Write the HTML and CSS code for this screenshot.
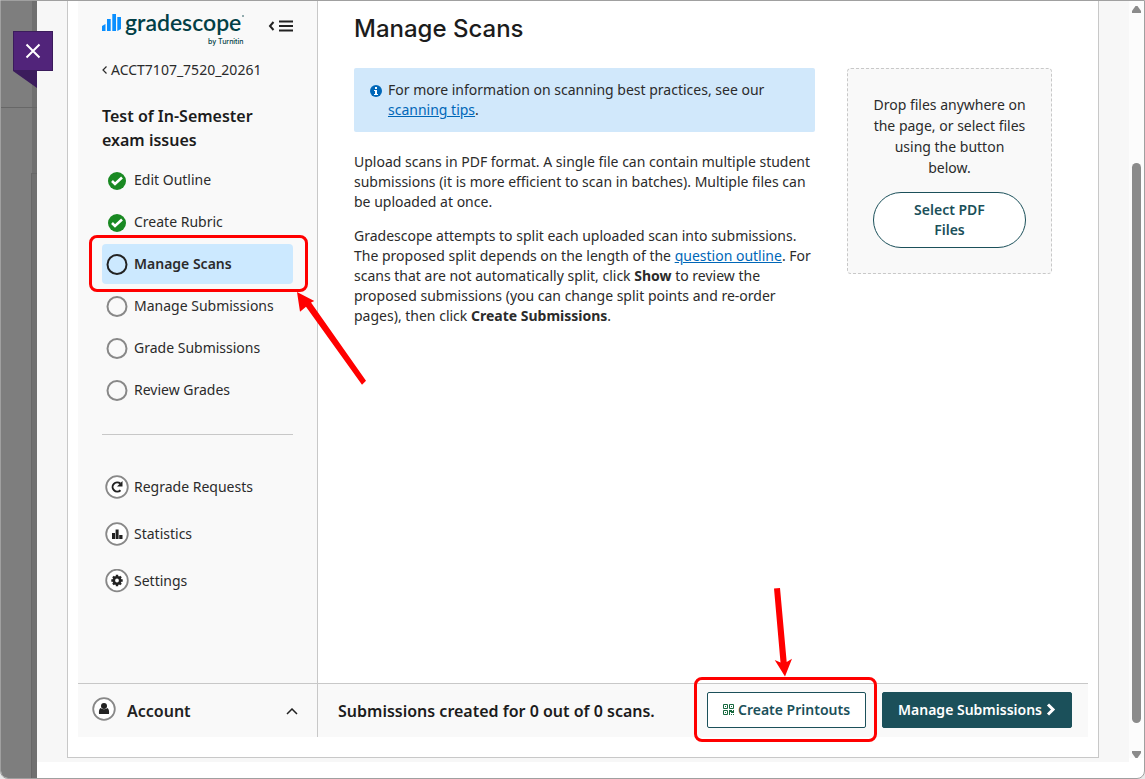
FILE: index.html
```html
<!DOCTYPE html>
<html lang="en">
<head>
<meta charset="utf-8">
<title>Manage Scans | Gradescope</title>
<link rel="stylesheet" href="styles.css">
</head>
<body>
<div class="window">
  <div class="backdrop">
    <div class="backdrop-top"></div>
    <div class="backdrop-body"></div>
    <button class="close" aria-label="Close"><svg width="16" height="16" viewBox="0 0 16 16"><path d="M1.500 1.500l13 13M14.500 1.500l-13 13" fill="none" stroke="#fff" stroke-width="2"/></svg></button>
    <svg class="close-fold" width="24" height="17" viewBox="0 0 24 17"><path d="M0 0h24v17z" fill="#3b1c5c"/></svg>
  </div>
  <div class="panel">
    <div class="card">
      <aside class="sidebar">
        <div class="brand">
          <svg class="logo" width="144" height="36" viewBox="0 0 144 36" role="img" aria-label="Gradescope by Turnitin">
            <g fill="#0a8fff"><path d="M0 13l3.500-2v7H0z"/><rect x="5" y="6" width="3.700" height="12"/><rect x="10.300" y="1" width="3.700" height="17"/><path d="M15.300 4H19v12l-3.700 2z"/></g>
            <text class="logo-name" x="23" y="18">gradescope</text>
            <text class="logo-by" x="106" y="31">by Turnitin</text>
            <circle cx="141" cy="3" r="1" fill="#6f9195"/>
          </svg>
          <button class="collapse" aria-label="Collapse sidebar"><svg width="25" height="14" viewBox="0 0 25 14"><path d="M5.500 3L2 7l3.500 4" fill="none" stroke="#222" stroke-width="2"/><path d="M11 2.500h14M11 7h14M11 11.500h14" stroke="#222" stroke-width="2"/></svg></button>
        </div>
        <a class="course" href="#"><svg width="5" height="8" viewBox="0 0 5 8"><path d="M4.500.5L1 4l3.500 3.500" fill="none" stroke="#2b2b2b" stroke-width="1.200"/></svg>ACCT7107_7520_20261</a>
        <h2 class="assignment">Test of In-Semester exam issues</h2>
        <nav class="steps" aria-label="Assignment steps">
          <a class="step" href="#"><svg class="step-icon" viewBox="0 0 22 22"><circle cx="11" cy="12" r="9" fill="#198922"/><path d="M6 12l3 3 7-6.500" fill="none" stroke="#fff" stroke-width="2.600"/></svg>Edit Outline</a>
          <a class="step" href="#"><svg class="step-icon" viewBox="0 0 22 22"><circle cx="11" cy="12" r="9" fill="#198922"/><path d="M6 12l3 3 7-6.500" fill="none" stroke="#fff" stroke-width="2.600"/></svg>Create Rubric</a>
          <a class="step step-active" href="#" aria-current="page"><svg class="step-icon" viewBox="0 0 22 22"><circle cx="11" cy="11.500" r="9.500" fill="none" stroke="#222" stroke-width="2"/></svg>Manage Scans
            <span class="mark mark-step"></span>
            <svg class="arrow arrow-step" width="72" height="94" viewBox="0 0 72 94"><path d="M0 0l17.300 9-3.300 1.500 55 78.200-4 4L9 14.700l-6 5z" fill="#f00"/></svg>
          </a>
          <a class="step" href="#"><svg class="step-icon" viewBox="0 0 22 22"><circle cx="11" cy="11.500" r="9.500" fill="none" stroke="#888" stroke-width="2"/></svg>Manage Submissions</a>
          <a class="step" href="#"><svg class="step-icon" viewBox="0 0 22 22"><circle cx="11" cy="11.500" r="9.500" fill="none" stroke="#888" stroke-width="2"/></svg>Grade Submissions</a>
          <a class="step" href="#"><svg class="step-icon" viewBox="0 0 22 22"><circle cx="11" cy="11.500" r="9.500" fill="none" stroke="#888" stroke-width="2"/></svg>Review Grades</a>
        </nav>
        <hr class="divider">
        <nav class="tools" aria-label="Assignment tools">
          <a class="tool" href="#"><svg class="tool-icon" viewBox="0 0 24 24"><circle cx="12" cy="12" r="10.800" fill="#fff" stroke="#888" stroke-width="1.800"/><path d="M15.500 15.200A4.600 4.600 0 1 1 15.300 8.600" fill="none" stroke="#222" stroke-width="2"/><path d="M17.500 6v5.500H12z" fill="#222"/></svg>Regrade Requests</a>
          <a class="tool" href="#"><svg class="tool-icon" viewBox="0 0 24 24"><circle cx="12" cy="12" r="10.800" fill="#fff" stroke="#888" stroke-width="1.800"/><path d="M7 11h3v6H7zM10.600 7.500h3V17h-3zM14.200 13h3.300v4h-3.300z" fill="#222"/></svg>Statistics</a>
          <a class="tool" href="#"><svg class="tool-icon" viewBox="0 0 24 24"><circle cx="12" cy="11.500" r="10.800" fill="#fff" stroke="#888" stroke-width="1.800"/><circle cx="12" cy="11.500" r="3.200" fill="none" stroke="#222" stroke-width="2.600"/><path d="M12 5.800v2.500M12 14.700v2.500M6.300 11.500h2.500M15.200 11.500h2.500M8 7.500l1.700 1.700M14.300 13.800l1.700 1.700M16 7.500l-1.700 1.700M9.700 13.800L8 15.500" stroke="#222" stroke-width="2.400"/></svg>Settings</a>
        </nav>
      </aside>
      <main class="main">
        <section class="info">
          <h1 class="title">Manage Scans</h1>
          <div class="notice">
            <svg width="12" height="12" viewBox="0 0 12 12"><circle cx="6" cy="6" r="6" fill="#0067b8"/><path d="M5 2h2v2H5zM4 5h3v4h1v1H4V9h1V6H4z" fill="#fff"/></svg>
            <p>For more information on scanning best practices, see our <a href="#">scanning tips</a>.</p>
          </div>
          <p class="text">Upload scans in PDF format. A single file can contain multiple student submissions (it is more efficient to scan in batches). Multiple files can be uploaded at once.</p>
          <p class="text">Gradescope attempts to split each uploaded scan into submissions. The proposed split depends on the length of the <a href="#">question outline</a>. For scans that are not automatically split, click <strong>Show</strong> to review the proposed submissions (you can change split points and re-order pages), then click <strong>Create Submissions</strong>.</p>
        </section>
        <section class="drop">
          <p>Drop files anywhere on the page, or select files using the button below.</p>
          <button class="select">Select PDF Files</button>
        </section>
      </main>
      <button class="account"><svg width="24" height="24" viewBox="0 0 24 24"><circle cx="12" cy="12" r="10.800" fill="#fff" stroke="#888" stroke-width="1.800"/><circle cx="12" cy="9" r="3" fill="#222"/><path d="M8.500 11q3.500 2.500 7 0 2 1.500 1.500 6H7q-.5-4.500 1.500-6z" fill="#222"/></svg><span>Account</span><svg class="chevron" width="12" height="7" viewBox="0 0 12 7"><path d="M1 6l5-5 5 5" fill="none" stroke="#222" stroke-width="1.500"/></svg></button>
      <footer class="actions">
        <p class="count">Submissions created for 0 out of 0 scans.</p>
        <button class="btn"><svg width="11" height="11" viewBox="0 0 11 11"><path d="M.5.5h4v4h-4zM6.500.5h4v4h-4zM.5 6.500h4v4h-4z" fill="none" stroke="#17693f"/><path d="M2 2h1v1H2zM8 2h1v1H8zM2 8h1v1H2zM6 6h3v1h1V6h1v3H8V8H7v3H6zM8 10h1v1H8zM10 10h1v1h-1z" fill="#17693f"/></svg>Create Printouts
          <span class="mark mark-print"></span>
          <svg class="arrow arrow-print" width="20" height="90" viewBox="0 0 20 90"><path d="M0 .5L6 0l6.700 74 5.300-3.300L11 88.500.7 72l5.800 2.500z" fill="#f00"/></svg>
        </button>
        <button class="btn btn-dark">Manage Submissions<svg width="10" height="13" viewBox="0 0 10 13"><path d="M2 1.500l5 5-5 5" fill="none" stroke="#fff" stroke-width="3"/></svg></button>
      </footer>
    </div>
  </div>
  <div class="scrollbar" aria-hidden="true">
    <svg width="9" height="7" viewBox="0 0 9 7"><path d="M0 7h9V5L5.500 0h-2L0 5z" fill="#8b8b8b"/></svg>
    <div class="thumb"></div>
    <svg width="9" height="7" viewBox="0 0 9 7"><path d="M0 0h9v2L5.500 7h-2L0 2z" fill="#8b8b8b"/></svg>
  </div>
</div>
</body>
</html>
```
FILE: styles.css
```css
* { box-sizing: border-box; }
body { margin: 0; background: #e8e8e8; color: #2b2b2b; font: 14px/20px "Noto Sans", sans-serif; }
p, h1, h2 { margin: 0; }
button { padding: 0; border: 0; background: none; color: inherit; font: inherit; cursor: pointer; }
svg { flex: none; }
.main a { color: #0067b8; text-decoration: underline; }

.window { display: flex; min-height: 100vh; border: 1px solid #a0a0a0; border-radius: 0 0 8px 8px; background: #fff; }

.backdrop { position: relative; flex: none; display: flex; flex-direction: column; width: 36px; border-radius: 0 0 0 7px; background: linear-gradient(90deg, #7e7e7e 31px, #707070 31px); }
.backdrop-top { height: 107px; border-bottom: 1px solid #676767; }
.backdrop-body { flex: 1; margin: 65px 0 0 30px; border: solid #676767; border-width: 1px 0 0 1px; }
.close { position: absolute; z-index: 2; top: 30px; left: 12px; display: grid; place-items: center; width: 40px; height: 40px; border: 1px solid #3b1c5c; background: #51247a; }
.close-fold { position: absolute; top: 70px; left: 12px; }

.panel { flex: 1; display: flex; padding: 0 30px 4px; margin-bottom: 16px; background: #f7f7f7; }
.card { flex: 1; display: grid; grid-template: 1fr auto / 240px 1fr; padding: 0 10px 20px; border: solid #c8c8c8; border-width: 0 1px 1px; background: #fff; }

.sidebar { padding: 12px 24px; border-right: 1px solid #c8c8c8; background: #f9f9f9; }
.brand { display: flex; justify-content: space-between; height: 36px; }
.logo { overflow: visible; }
.logo-name { fill: #023f46; font: 600 23px Lato, sans-serif; }
.logo-by { fill: #023f46; font: 500 7px Inter, sans-serif; }
.collapse { display: flex; align-items: center; height: 26px; }
.course { display: flex; align-items: center; gap: 4px; margin-top: 11px; color: inherit; text-decoration: none; }
.assignment { margin-top: 24px; color: #1c1c1c; font-size: 16px; font-weight: 600; line-height: 24px; }
.steps { display: grid; gap: 2px; margin-top: 8px; }
.step { position: relative; display: flex; align-items: center; gap: 6px; height: 40px; padding-left: 4px; border-radius: 4px; color: inherit; text-decoration: none; }
.step-icon { width: 22px; height: 22px; overflow: visible; }
.step-active { background: #cce9ff; font-weight: 600; }
.divider { margin: 24px 0 0; border: 0; border-top: 1px solid #c8c8c8; }
.tools { display: grid; gap: 23px; margin-top: 40px; }
.tool { display: flex; align-items: center; gap: 5px; height: 24px; padding-left: 3px; color: inherit; text-decoration: none; }
.tool-icon { width: 24px; height: 24px; }

.mark { position: absolute; border: 3px solid #f00; border-radius: 8px; }
.mark-step { inset: -9px -15px -8px -13px; }
.arrow { position: absolute; z-index: 3; pointer-events: none; }
.arrow-step { top: 48px; left: 195px; }
.mark-print { inset: -16px -12px -15px -14px; }
.arrow-print { top: -105px; left: 66px; }

.main { display: flex; align-items: flex-start; gap: 32px; padding: 12px 36px; }
.info { flex: 1; }
.title { color: #1c1c1c; font: 500 24px/32px Inter, sans-serif; }
.notice { display: flex; gap: 6px; margin: 23px 0 20px; padding: 12px 16px; border-radius: 2px; background: #d1e8fb; }
.notice svg { margin-top: 5px; }
.text + .text { margin-top: 14px; }
strong { font-weight: 700; }
.drop { flex: none; width: 205px; margin-top: 55px; padding: 25px; border: 1px dashed #c8c8c8; border-radius: 4px; background: #f9f9f9; text-align: center; line-height: 21px; }
.select { width: 100%; margin-top: 14px; padding: 7px 32px; border: 1px solid #1b505a; border-radius: 28px; background: #fff; color: #1b505a; font-weight: 600; line-height: 20px; }

.account { display: flex; align-items: center; gap: 11px; padding: 0 19px 4px 14px; border: solid #c8c8c8; border-width: 1px 1px 0 0; background: #f9f9f9; color: #222; font-size: 16px; font-weight: 600; text-align: left; }
.account span { flex: 1; padding-top: 4px; }
.chevron { margin-top: 6px; }
.actions { display: flex; align-items: center; gap: 16px; height: 54px; padding: 0 16px 2px 20px; border-top: 1px solid #c8c8c8; background: #f9f9f9; }
.count { flex: 1; padding-top: 3px; color: #1c1c1c; font-size: 16px; font-weight: 600; white-space: nowrap; }
.btn { position: relative; display: flex; align-items: center; gap: 4px; height: 36px; padding: 0 15px; border: 1px solid #1b505a; border-radius: 2px; background: #fff; color: #1b505a; font-weight: 600; white-space: nowrap; }
.btn-dark { background: #1b505a; color: #fff; }

.scrollbar { flex: none; display: flex; flex-direction: column; align-items: center; width: 15px; margin-bottom: 20px; padding-top: 5px; background: #fcfcfc; }
.thumb { flex: 1; width: 9px; margin: 150px 0 28px; border-radius: 5px; background: #8b8b8b; }
```
